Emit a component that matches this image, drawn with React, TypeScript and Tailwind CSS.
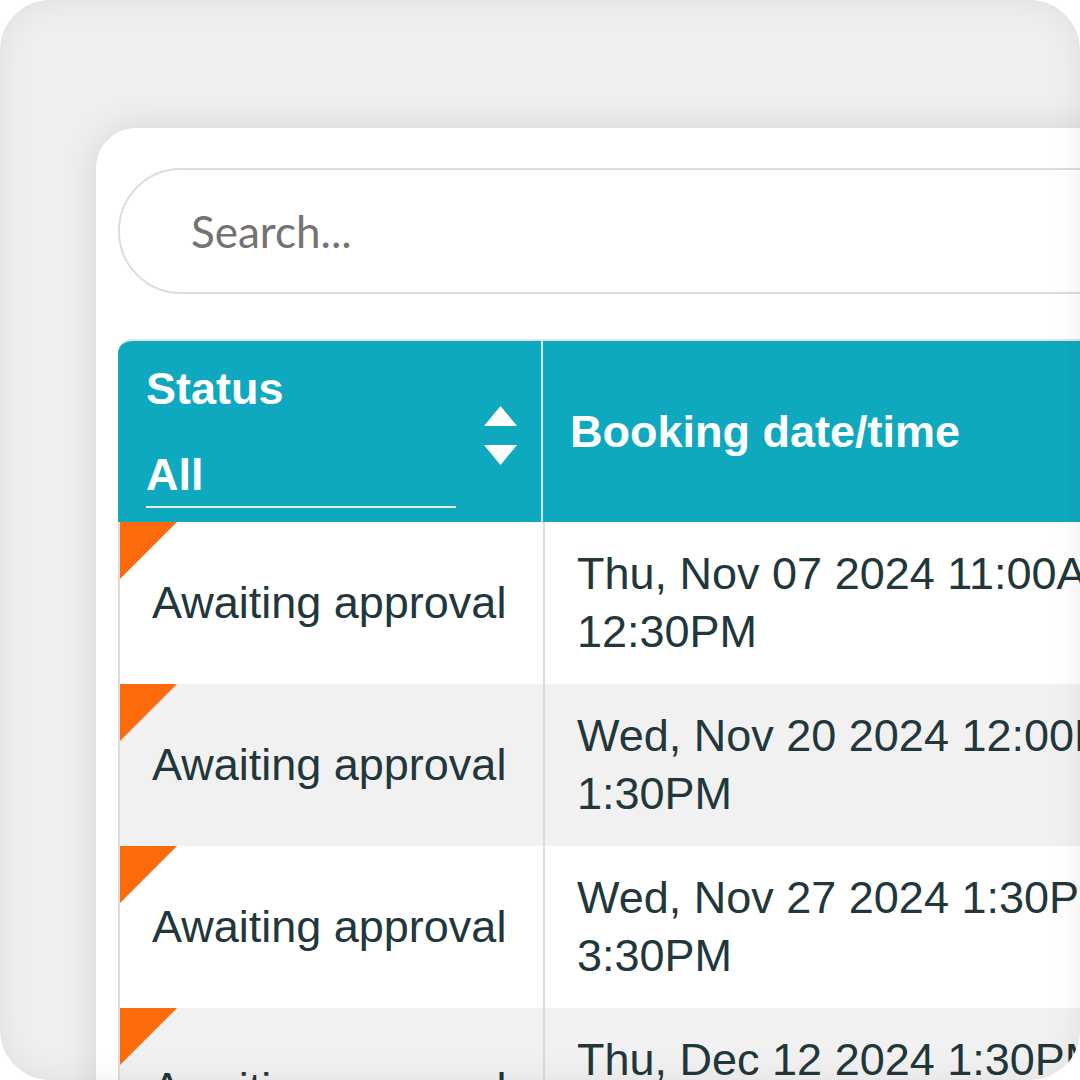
import React from "react";

const rows = [
  { bg: "bg-white", l1: "Thu, Nov 07 2024 11:00AM -", l2: "12:30PM" },
  { bg: "bg-[#f1f1f1]", l1: "Wed, Nov 20 2024 12:00PM -", l2: "1:30PM" },
  { bg: "bg-white", l1: "Wed, Nov 27 2024 1:30PM -", l2: "3:30PM" },
  { bg: "bg-[#f1f1f1]", l1: "Thu, Dec 12 2024 1:30PM -", l2: "3:00PM" },
];

function SortArrows() {
  return (
    <svg width="34" height="60" viewBox="0 0 34 60" className="ml-[28px] mt-[40px] shrink-0">
      <path d="M0 20 L33 20 L16.5 0 Z" fill="#ffffff" />
      <path d="M0 39 L33 39 L16.5 59 Z" fill="#ffffff" />
    </svg>
  );
}

export default function App() {
  return (
    <div className="w-[1080px] h-[1080px] bg-white">
      <div className="relative w-full h-full rounded-[50px] overflow-hidden bg-[#efefef] pl-[96px] pt-[128px]">
        <div className="w-[1200px] h-[1000px] bg-white rounded-tl-[40px] shadow-[0_0_36px_rgba(0,0,0,0.11)] pl-[22px] pt-[40px]">
          {/* Search */}
          <div className="h-[126px] rounded-full border-2 border-[#dcdcdc] flex items-center pl-[71px]">
            <span className="text-[44px] leading-none text-[#737373] [font-family:Lato,'Open_Sans',sans-serif]">
              Search...
            </span>
          </div>

          {/* Table */}
          <div className="mt-[45px] rounded-tl-[14px] overflow-hidden border-t-2 border-[#e2e2e2] [font-family:'Liberation_Sans',Arial,sans-serif]">
            {/* Header */}
            <div className="flex h-[181px] bg-[#0fa9bf] text-white font-bold">
              <div className="w-[425px] shrink-0 border-r-2 border-[#cfe6ea] flex pl-[28px] pt-[25px]">
                <div className="w-[310px] flex flex-col">
                  <span className="text-[45px] leading-none">Status</span>
                  <span className="text-[45px] leading-none mt-[41px]">All</span>
                  <div className="h-[2px] bg-[#e3eef0] mt-[9px]" />
                </div>
                <SortArrows />
              </div>
              <div className="flex-1 flex items-center pl-[27px]">
                <span className="text-[45px] leading-none">Booking date/time</span>
              </div>
            </div>

            {/* Body */}
            <div className="border-l-2 border-[#dcdcdc] text-[#22373b]">
              {rows.map((r, i) => (
                <div key={i} className={`flex h-[162px] ${r.bg}`}>
                  <div className="relative w-[425px] shrink-0 border-r-2 border-[#dcdcdc] flex items-center pl-8">
                    <svg width="57" height="57" viewBox="0 0 57 57" className="absolute left-0 top-0">
                      <path d="M0 0 L57 0 L0 57 Z" fill="#fd6a0b" />
                    </svg>
                    <span className="text-[45px] leading-[58px] whitespace-nowrap">Awaiting approval</span>
                  </div>
                  <div className="flex-1 flex flex-col justify-center pl-8">
                    <span className="text-[45px] leading-[58px] whitespace-nowrap">{r.l1}</span>
                    <span className="text-[45px] leading-[58px] whitespace-nowrap">{r.l2}</span>
                  </div>
                </div>
              ))}
            </div>
          </div>
        </div>
        <div className="pointer-events-none absolute inset-0 rounded-[50px] shadow-[inset_0_0_34px_rgba(0,0,0,0.07)]" />
      </div>
    </div>
  );
}
